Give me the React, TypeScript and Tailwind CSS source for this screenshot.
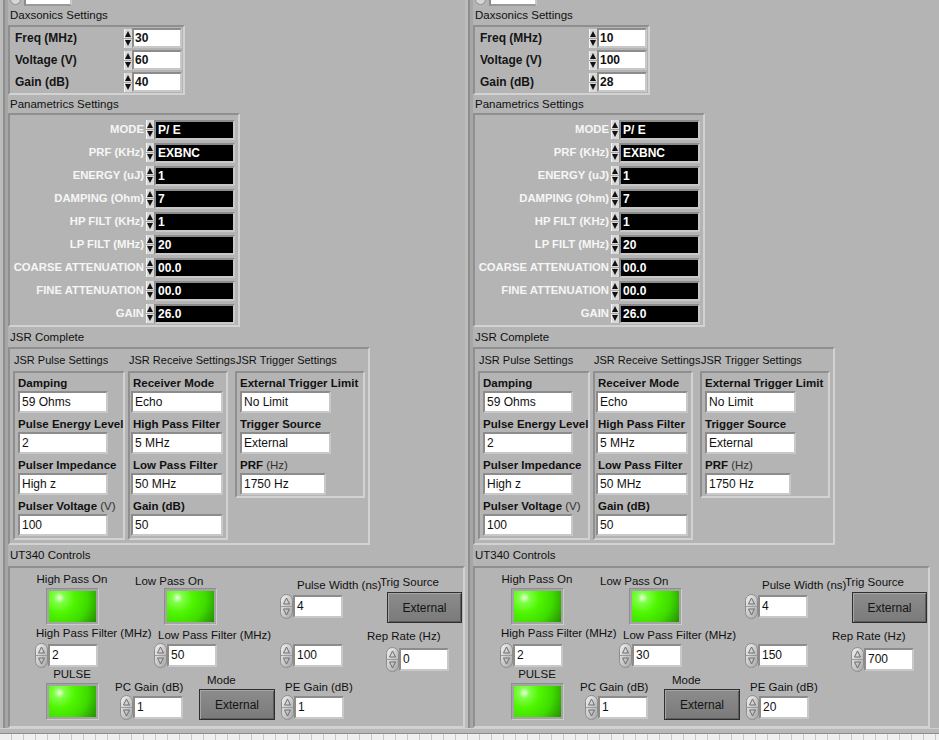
import React from "react";

// LabVIEW style front panel, two instrument halves side by side
const frameBox =
  "border-2 border-t-[#8f8f8f] border-l-[#8f8f8f] border-r-[#d2d2d2] border-b-[#d2d2d2]";
const inputFrame =
  "border-2 border-t-[#8c8c8c] border-l-[#8c8c8c] border-r-[#c8c8c8] border-b-[#c8c8c8]";

function DaxSpin() {
  return (
    <svg width="8" height="19" viewBox="0 0 8 19" className="shrink-0" aria-hidden>
      <rect x="0" y="0" width="8" height="19" fill="#d9d9d9" />
      <rect x="0" y="0" width="1" height="19" fill="#f6f6f6" />
      <rect x="0" y="9" width="8" height="1" fill="#a8a8a8" />
      <path d="M4 2 L7 8 H1 Z" fill="#111" />
      <path d="M1 11 H7 L4 17 Z" fill="#111" />
    </svg>
  );
}

function UtSpin() {
  return (
    <svg width="13" height="25" viewBox="0 0 13 25" className="shrink-0" aria-hidden>
      <defs>
        <linearGradient id="utspin" x1="0" y1="0" x2="1" y2="1">
          <stop offset="0" stopColor="#f4f4f4" />
          <stop offset="1" stopColor="#a4a4a4" />
        </linearGradient>
      </defs>
      <rect x="0.5" y="0.5" width="12" height="24" rx="6" fill="url(#utspin)" stroke="#8c8c8c" />
      <line x1="1" y1="12.5" x2="12" y2="12.5" stroke="#9c9c9c" />
      <path d="M6.5 4 L9.5 10 H3.5 Z" fill="none" stroke="#6e6e6e" />
      <path d="M3.5 15 H9.5 L6.5 21 Z" fill="none" stroke="#6e6e6e" />
    </svg>
  );
}

function UtNum({ value }: { value: string }) {
  return (
    <div className="flex items-center">
      <UtSpin />
      <div className={`h-[23px] w-[50px] ${inputFrame} bg-white pl-[2px] text-[12px] leading-[19px]`}>
        {value}
      </div>
    </div>
  );
}

function Led() {
  return (
    <div className="w-fit border border-t-[#8e8e8e] border-l-[#8e8e8e] border-r-[#cccccc] border-b-[#cccccc] bg-[#a4a4a4] p-[2px]">
      <div className="h-[31px] w-[47px] bg-[radial-gradient(circle_at_22%_22%,#eaffe0_0%,#80ff48_12%,#4ff600_35%,#3fdb00_65%,#238f00_100%)]" />
    </div>
  );
}

function LvButton({ w }: { w: string }) {
  return (
    <div
      className={`flex h-[31px] ${w} items-center justify-center border border-[#2e2e2e] bg-[linear-gradient(#8c8c8c,#7a7a7a)] text-[12px] text-[#141414] shadow-[inset_1px_1px_0_#a6a6a6,inset_-1px_-1px_0_#5c5c5c]`}
    >
      External
    </div>
  );
}

function DaxRow({ label, value }: { label: string; value: string }) {
  return (
    <div className="flex h-[22px] items-center">
      <div className="w-[114px] pl-[5px] text-[12px] font-bold text-[#151515]">{label}</div>
      <DaxSpin />
      <div className={`h-[20px] w-[50px] ${inputFrame} bg-white pl-[1px] text-[12px] font-bold leading-[16px]`}>
        {value}
      </div>
    </div>
  );
}

function PanRow({ label, value }: { label: string; value: string }) {
  return (
    <div className="flex h-[23px] items-center">
      <div className="w-[134px] whitespace-nowrap text-right text-[11.3px] font-bold text-[#f6f6f6]">{label}</div>
      <div className="w-[2px]" />
      <DaxSpin />
      <div className={`h-[20px] w-[81px] ${inputFrame} bg-black pl-[2px] text-[12px] font-bold leading-[16px] text-white`}>
        {value}
      </div>
    </div>
  );
}

function Field({
  label,
  unit,
  value,
  box,
  last,
}: {
  label: string;
  unit?: string;
  value: string;
  box: string;
  last?: boolean;
}) {
  return (
    <div className={last ? "" : "mb-[4px]"}>
      <div className="h-[14px] whitespace-nowrap pl-[3px] text-[11.5px] font-bold leading-[14px]">
        {label}
        {unit && <span className="font-normal text-[#333]"> {unit}</span>}
      </div>
      <div className={`mt-[1px] h-[22px] ${box} ${inputFrame} bg-white pl-[2px] text-[12px] leading-[18px]`}>
        {value}
      </div>
    </div>
  );
}

const PAN: [string, string][] = [
  ["MODE", "P/ E"],
  ["PRF (KHz)", "EXBNC"],
  ["ENERGY (uJ)", "1"],
  ["DAMPING (Ohm)", "7"],
  ["HP FILT (KHz)", "1"],
  ["LP FILT (MHz)", "20"],
  ["COARSE ATTENUATION", "00.0"],
  ["FINE ATTENUATION", "00.0"],
  ["GAIN", "26.0"],
];

type HalfProps = {
  w: string;
  dax: [string, string, string];
  lpf: string;
  mid: string;
  rep: string;
  pe: string;
};

function Half({ w, dax, lpf, mid, rep, pe }: HalfProps) {
  return (
    <div
      className={`${w} shrink-0 pl-[8px] shadow-[inset_3px_0_0_#bcbcbc,inset_5px_0_0_#8e8e8e,inset_8px_0_0_#a6a6a6]`}
    >
      {/* control cut off at the top edge */}
      <div className="flex h-[6px] items-start">
        <div className="ml-[2px] mt-[-6px] h-[11px] w-[11px] rounded-full border border-[#8e8e8e] bg-[#d6d6d6]" />
        <div className="ml-[3px] h-[6px] w-[48px] border-2 border-t-0 border-l-[#8c8c8c] border-r-[#c8c8c8] border-b-[#9a9a9a] bg-white" />
      </div>

      <div className="h-[19px] pl-[2px] text-[11.5px] leading-[19px]">Daxsonics Settings</div>
      <div className={`w-[177px] ${frameBox}`}>
        <DaxRow label="Freq (MHz)" value={dax[0]} />
        <DaxRow label="Voltage (V)" value={dax[1]} />
        <DaxRow label="Gain (dB)" value={dax[2]} />
      </div>

      <div className="h-[18px] pl-[2px] text-[11.5px] leading-[18px]">Panametrics Settings</div>
      <div className={`w-[232px] pt-[3px] ${frameBox}`}>
        {PAN.map(([l, v]) => (
          <PanRow key={l} label={l} value={v} />
        ))}
      </div>

      <div className="h-[20px] pl-[2px] text-[11.5px] leading-[20px]">JSR Complete</div>
      <div className={`flex h-[198px] w-[362px] ${frameBox}`}>
        <div className="ml-[3px] flex w-[112px] shrink-0 flex-col">
          <div className="h-[22px] whitespace-nowrap pl-[1px] text-[11px] leading-[22px]">JSR Pulse Settings</div>
          <div className={`h-[169px] w-[112px] pt-[3px] ${frameBox}`}>
            <Field label="Damping" value="59 Ohms" box="ml-[3px] w-[90px]" />
            <Field label="Pulse Energy Level" value="2" box="ml-[3px] w-[90px]" />
            <Field label="Pulser Impedance" value="High z" box="ml-[3px] w-[90px]" />
            <Field label="Pulser Voltage" unit="(V)" value="100" box="ml-[3px] w-[90px]" last />
          </div>
        </div>
        <div className="ml-[3px] flex w-[100px] shrink-0 flex-col">
          <div className="h-[22px] whitespace-nowrap pl-[1px] text-[11px] leading-[22px]">JSR Receive Settings</div>
          <div className={`h-[169px] w-[100px] pt-[3px] ${frameBox}`}>
            <Field label="Receiver Mode" value="Echo" box="ml-[1px] w-[92px]" />
            <Field label="High Pass Filter" value="5 MHz" box="ml-[1px] w-[92px]" />
            <Field label="Low Pass Filter" value="50 MHz" box="ml-[1px] w-[92px]" />
            <Field label="Gain (dB)" value="50" box="ml-[1px] w-[92px]" last />
          </div>
        </div>
        <div className="ml-[7px] flex w-[130px] shrink-0 flex-col">
          <div className="h-[22px] whitespace-nowrap pl-[1px] text-[11px] leading-[22px]">JSR Trigger Settings</div>
          <div className={`h-[127px] w-[130px] pt-[3px] ${frameBox}`}>
            <Field label="External Trigger Limit" value="No Limit" box="ml-[3px] w-[91px]" />
            <Field label="Trigger Source" value="External" box="ml-[3px] w-[91px]" />
            <Field label="PRF" unit="(Hz)" value="1750 Hz" box="ml-[3px] w-[86px]" last />
          </div>
        </div>
      </div>

      <div className="h-[21px] pl-[2px] text-[11.5px] leading-[21px]">UT340 Controls</div>
      <div className={`h-[162px] w-[457px] text-[11.5px] ${frameBox}`}>
        <div className="flex h-[58px]">
          <div className="ml-[22px] flex w-[80px] shrink-0 flex-col items-center">
            <div className="mt-[4px] h-[14px] whitespace-nowrap leading-[14px]">High Pass On</div>
            <div className="mt-[2px]">
              <Led />
            </div>
          </div>
          <div className="flex w-[163px] shrink-0 flex-col items-start">
            <div className="ml-[23px] mt-[7px] h-[13px] whitespace-nowrap leading-[13px]">Low Pass On</div>
            <div className="ml-[52px]">
              <Led />
            </div>
          </div>
          <div className="flex w-[95px] shrink-0 flex-col items-start">
            <div className="ml-[22px] mt-[10px] h-[14px] whitespace-nowrap leading-[14px]">Pulse Width (ns)</div>
            <div className="ml-[5px] mt-[2px]">
              <UtNum value="4" />
            </div>
          </div>
          <div className="flex w-[95px] shrink-0 flex-col items-start">
            <div className="ml-[10px] mt-[7px] h-[14px] whitespace-nowrap leading-[14px]">Trig Source</div>
            <div className="ml-[17px] mt-[3px]">
              <LvButton w="w-[75px]" />
            </div>
          </div>
        </div>

        <div className="flex h-[41px]">
          <div className="flex w-[140px] shrink-0 flex-col items-start">
            <div className="ml-[26px] h-[14px] whitespace-nowrap leading-[14px]">High Pass Filter (MHz)</div>
            <div className="ml-[25px] mt-[3px]">
              <UtNum value="2" />
            </div>
          </div>
          <div className="flex w-[125px] shrink-0 flex-col items-start">
            <div className="ml-[8px] mt-[2px] h-[14px] whitespace-nowrap leading-[14px]">Low Pass Filter (MHz)</div>
            <div className="ml-[4px] mt-[1px]">
              <UtNum value={lpf} />
            </div>
          </div>
          <div className="flex w-[95px] shrink-0 flex-col items-start">
            <div className="ml-[5px] mt-[17px]">
              <UtNum value={mid} />
            </div>
          </div>
          <div className="flex w-[95px] shrink-0 flex-col items-start">
            <div className="ml-[-3px] mt-[3px] h-[14px] whitespace-nowrap leading-[14px]">Rep Rate (Hz)</div>
            <div className="ml-[16px] mt-[4px]">
              <UtNum value={rep} />
            </div>
          </div>
        </div>

        <div className="flex h-[59px]">
          <div className="ml-[22px] flex w-[80px] shrink-0 flex-col items-center">
            <div className="h-[14px] leading-[14px]">PULSE</div>
            <div className="mt-[2px]">
              <Led />
            </div>
          </div>
          <div className="flex w-[85px] shrink-0 flex-col items-start">
            <div className="ml-[3px] mt-[13px] h-[14px] whitespace-nowrap leading-[14px]">PC Gain (dB)</div>
            <div className="ml-[8px] mt-[1px]">
              <UtNum value="1" />
            </div>
          </div>
          <div className="flex w-[78px] shrink-0 flex-col items-start">
            <div className="ml-[10px] mt-[6px] h-[14px] leading-[14px]">Mode</div>
            <div className="ml-[2px] mt-[2px]">
              <LvButton w="w-[76px]" />
            </div>
          </div>
          <div className="flex w-[95px] shrink-0 flex-col items-start">
            <div className="ml-[10px] mt-[13px] h-[14px] whitespace-nowrap leading-[14px]">PE Gain (dB)</div>
            <div className="ml-[6px] mt-[1px]">
              <UtNum value={pe} />
            </div>
          </div>
        </div>
      </div>
    </div>
  );
}

export default function App() {
  return (
    <div className="h-[740px] w-[939px] overflow-hidden bg-[#b4b4b4] font-['Liberation_Sans',Arial,sans-serif] text-[#111]">
      <div className="flex h-[728px]">
        <Half w="w-[465px]" dax={["30", "60", "40"]} lpf="50" mid="100" rep="0" pe="1" />
        <Half w="w-[474px]" dax={["10", "100", "28"]} lpf="30" mid="150" rep="700" pe="20" />
      </div>
      <div className="h-[5px] border-t border-[#cfcfcf] bg-[#b8b8b8]" />
      <div className="h-[7px] border-t border-[#8c8c8c] bg-[repeating-linear-gradient(90deg,#f0f0f0_0px,#f0f0f0_11px,#c9c9c9_11px,#c9c9c9_12px)]" />
    </div>
  );
}
